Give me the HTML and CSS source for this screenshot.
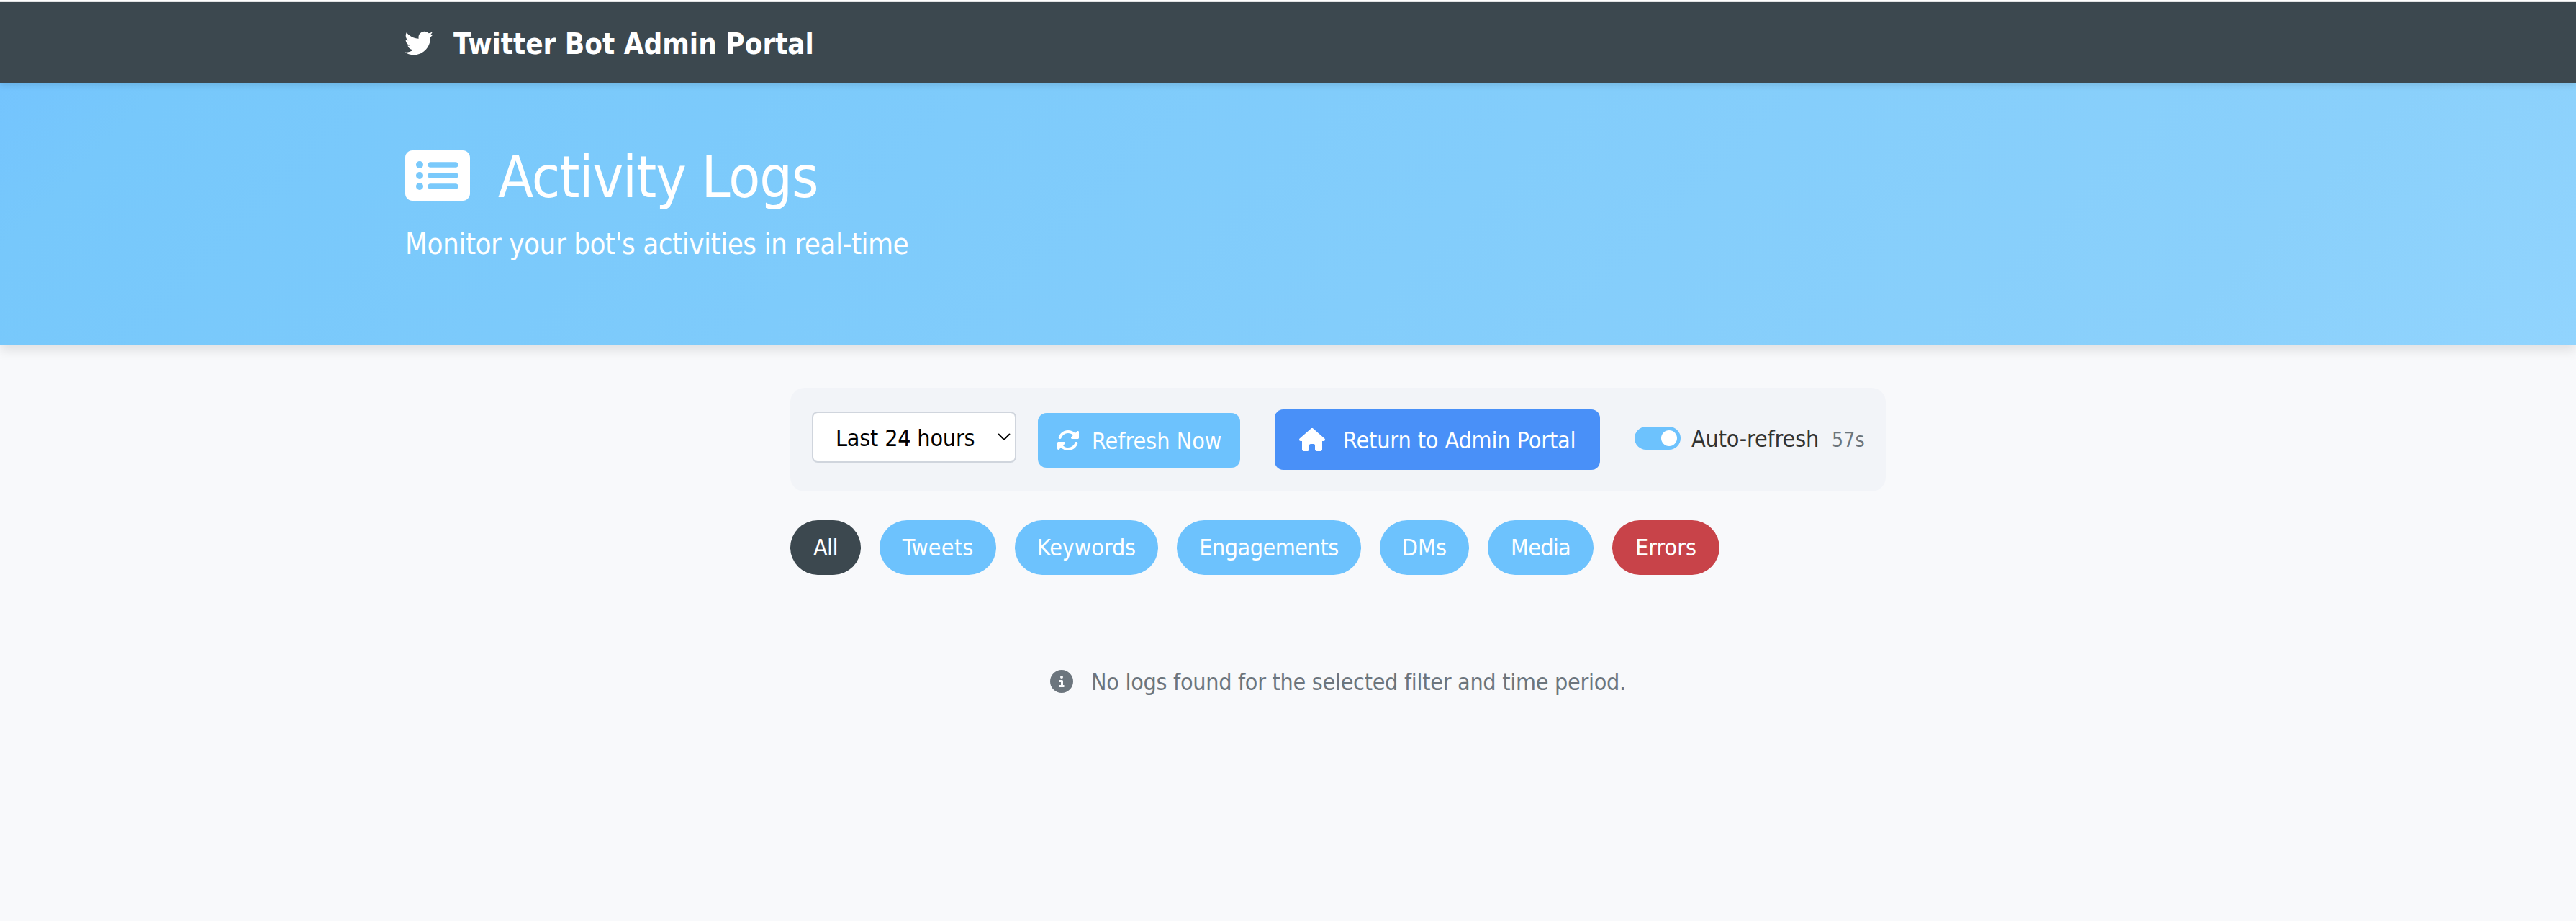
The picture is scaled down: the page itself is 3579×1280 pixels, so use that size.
FILE: index.html
```html
<!DOCTYPE html>
<html lang="en">
<head>
<meta charset="utf-8">
<title>Activity Logs</title>
<link rel="stylesheet" href="styles.css">
</head>
<body>
<nav class="navbar">
  <svg class="icon-brand" viewBox="0 0 512 512"><path d="M459.37 151.716c.325 4.548.325 9.097.325 13.645 0 138.72-105.583 298.558-298.558 298.558-59.452 0-114.68-17.219-161.137-47.106 8.447.974 16.568 1.299 25.34 1.299 49.055 0 94.213-16.568 130.274-44.832-46.132-.975-84.792-31.188-98.112-72.772 6.498.974 12.995 1.624 19.818 1.624 9.421 0 18.843-1.3 27.614-3.573-48.081-9.747-84.143-51.98-84.143-102.985v-1.299c13.969 7.797 30.214 12.67 47.431 13.319-28.264-18.843-46.781-51.005-46.781-87.391 0-19.492 5.197-37.36 14.294-52.954 51.655 63.675 129.3 105.258 216.365 109.807-1.624-7.797-2.599-15.918-2.599-24.04 0-57.828 46.782-104.934 104.934-104.934 30.213 0 57.502 12.67 76.67 33.137 23.715-4.548 46.456-13.32 66.599-25.34-7.798 24.366-24.366 44.833-46.132 57.827 21.117-2.273 41.584-8.122 60.426-16.243-14.292 20.791-32.161 39.308-52.628 54.253z"/></svg>
  <span class="brand">Twitter Bot Admin Portal</span>
</nav>
<header class="hero">
  <div class="hero-title">
    <svg class="icon-list" viewBox="0 0 576 512"><path d="M0 96C0 60.7 28.7 32 64 32H512c35.3 0 64 28.7 64 64V416c0 35.3-28.7 64-64 64H64c-35.3 0-64-28.7-64-64V96zM128 288a32 32 0 1 0 0-64 32 32 0 1 0 0 64zm32-128a32 32 0 1 0 -64 0 32 32 0 1 0 64 0zM128 384a32 32 0 1 0 0-64 32 32 0 1 0 0 64zm96-248c-13.3 0-24 10.7-24 24s10.7 24 24 24H448c13.3 0 24-10.7 24-24s-10.7-24-24-24H224zm0 96c-13.3 0-24 10.7-24 24s10.7 24 24 24H448c13.3 0 24-10.7 24-24s-10.7-24-24-24H224zm0 96c-13.3 0-24 10.7-24 24s10.7 24 24 24H448c13.3 0 24-10.7 24-24s-10.7-24-24-24H224z"/></svg>
    <h1>Activity Logs</h1>
  </div>
  <p class="lead">Monitor your bot's activities in real-time</p>
</header>
<main class="content">
  <section class="controls">
    <div class="select"><span>Last 24 hours</span>
      <svg class="chevron" viewBox="0 0 18 11"><path d="M1.5 1.5 9 9l7.500-7.500"/></svg>
    </div>
    <button class="btn btn-refresh">
      <svg class="icon" viewBox="0 0 512 512"><path d="M142.900 142.900c62.200-62.200 162.700-62.500 225.300-1L327 183c-6.900 6.900-8.900 17.200-5.200 26.200s12.500 14.800 22.200 14.800H472c13.300 0 24-10.700 24-24V72c0-9.700-5.800-18.500-14.800-22.200s-19.300-1.700-26.200 5.200L413.400 96.600c-87.600-86.500-228.700-86.200-315.800 1C73.200 122 55.600 150.700 44.800 181.400c-5.900 16.700 2.900 34.900 19.500 40.800s34.900-2.900 40.800-19.500c7.700-21.800 20.200-42.300 37.800-59.800zM16 312V440c0 9.700 5.800 18.500 14.800 22.200s19.300 1.700 26.200-5.200l41.600-41.600c87.600 86.500 228.700 86.200 315.800-1c24.400-24.400 42.100-53.100 52.900-83.700c5.900-16.700-2.900-34.900-19.500-40.800s-34.900 2.900-40.800 19.500c-7.700 21.800-20.200 42.300-37.800 59.800c-62.200 62.200-162.700 62.500-225.300 1L185 329c6.900-6.900 8.900-17.200 5.200-26.200s-12.500-14.800-22.200-14.800H40c-13.300 0-24 10.700-24 24z"/></svg>
      <span>Refresh Now</span>
    </button>
    <a class="btn btn-return">
      <svg class="icon icon-home" viewBox="0 0 576 512"><path d="M575.8 255.5c0 18-15 32.1-32 32.1h-32l.7 160.2c0 2.7-.2 5.4-.5 8.1V472c0 22.1-17.900 40-40 40H392c-22.100 0-40-17.900-40-40V384c0-17.700-14.300-32-32-32H256c-17.700 0-32 14.300-32 32v88c0 22.100-17.900 40-40 40H104c-22.100 0-40-17.900-40-40V287.600H32c-18 0-32-14-32-32.100c0-9 3-17 10-24L266.400 8c7-7 15-8 22-8s15 2 21 7L564.800 231.500c8 7 12 15 11 24z"/></svg>
      <span>Return to Admin Portal</span>
    </a>
    <div class="switch"><span class="knob"></span></div>
    <span class="switch-label">Auto-refresh</span>
    <span class="countdown">57s</span>
  </section>
  <section class="filters">
    <button class="pill pill-all">All</button>
    <button class="pill pill-tweets">Tweets</button>
    <button class="pill pill-keywords">Keywords</button>
    <button class="pill pill-engagements">Engagements</button>
    <button class="pill pill-dms">DMs</button>
    <button class="pill pill-media">Media</button>
    <button class="pill pill-errors">Errors</button>
  </section>
  <section class="empty">
    <svg class="icon" viewBox="0 0 512 512"><path d="M256 512A256 256 0 1 0 256 0a256 256 0 1 0 0 512zM216 336h24V272H216c-13.300 0-24-10.700-24-24s10.700-24 24-24h48c13.300 0 24 10.700 24 24v88h8c13.300 0 24 10.700 24 24s-10.700 24-24 24H216c-13.300 0-24-10.700-24-24s10.700-24 24-24zm40-208a32 32 0 1 1 0 64 32 32 0 1 1 0-64z"/></svg>
    <span>No logs found for the selected filter and time period.</span>
  </section>
</main>
</body>
</html>
```
FILE: styles.css
```css
* { box-sizing: border-box; }
body {
  margin: 0;
  min-height: 1280px;
  background: #f8f9fb;
  color: #333;
  font-family: "DejaVu Sans Condensed", "DejaVu Sans", sans-serif;
  font-size: 32px;
  line-height: 48px;
  white-space: nowrap;
  border-top: 1px solid #fff;
}
svg { display: block; flex: none; fill: currentColor; }
h1, p { margin: 0; font-weight: 400; }
button { font: inherit; border: 0; margin: 0; color: inherit; }

.navbar {
  position: relative;
  z-index: 1;
  display: flex;
  align-items: flex-start;
  gap: 28px;
  height: 114px;
  padding: 28px 562px 0;
  border-top: 2px solid #e1e2e3;
  background: #3c484f;
  color: #fff;
  box-shadow: 0 4px 8px rgba(0, 0, 0, .1);
}
.icon-brand { width: 40px; height: 40px; margin-top: 9px; }
.brand { font-size: 40px; line-height: 60px; font-weight: 700; }

.hero {
  height: 364px;
  padding: 84px 563px 0;
  background: linear-gradient(135deg, #74c4fe, #77c8fb 6%, #8ad0fb 85%, #91d4fe);
  color: #fff;
  box-shadow: 0 8px 15px rgba(0, 0, 0, .1);
}
.hero-title { display: flex; gap: 39px; margin-bottom: 14px; }
.icon-list { width: 90px; height: 80px; margin-top: 5px; }
h1 { font-size: 80px; line-height: 96px; letter-spacing: -1.02px; }
.lead { font-size: 40px; line-height: 60px; letter-spacing: -.49px; }

.content { width: 1522px; margin: 60px 0 0 1098px; }
.controls {
  display: flex;
  align-items: flex-start;
  height: 144px;
  padding: 0 0 0 30px;
  border-radius: 20px;
  background: #f2f4f8;
}
.controls > * { flex: none; }
.select {
  display: flex;
  justify-content: space-between;
  width: 284px;
  height: 71px;
  margin-top: 33px;
  padding: 11px 6px 0 31px;
  border: 2px solid #d0d5dd;
  border-radius: 8px;
  background: #fff;
  color: #000;
  letter-spacing: -.19px;
}
.chevron {
  width: 18px;
  height: 11px;
  margin-top: 17px;
  fill: none;
  stroke: #000;
  stroke-width: 1.8;
  stroke-linecap: round;
  stroke-linejoin: round;
}
.btn { display: flex; align-items: flex-start; color: #fff; border-radius: 12px; }
.icon { width: 32px; height: 32px; }
.btn-refresh {
  gap: 17px;
  width: 281px;
  height: 76px;
  margin: 35px 0 0 30px;
  padding: 15px 0 0 26px;
  background: #6dc2fd;
}
.btn-refresh .icon { margin-top: 7px; }
.btn-return {
  gap: 25px;
  width: 452px;
  height: 84px;
  margin: 30px 0 0 48px;
  padding: 19px 0 0 34px;
  background: #4990f8;
  letter-spacing: -.11px;
}
.icon-home { width: 36px; margin-top: 7px; }
.switch {
  display: flex;
  justify-content: flex-end;
  width: 64px;
  height: 32px;
  margin: 54px 0 0 48px;
  padding: 5px;
  border-radius: 16px;
  background: #6dc2fd;
}
.knob { width: 22px; height: 22px; border-radius: 50%; background: #fff; }
.switch-label { margin: 47px 0 0 15px; width: 195px; letter-spacing: -.15px; }
.countdown {
  margin-top: 52px;
  font-size: 28px;
  line-height: 42px;
  letter-spacing: .2px;
  color: #6c757d;
}

.filters { display: flex; gap: 26px; margin-top: 40px; }
.pill {
  height: 76px;
  padding: 0 0 1px;
  border-radius: 40px;
  background: #6dc2fd;
  color: #fff;
  text-align: center;
}
.pill-all { width: 98px; background: #3c484f; letter-spacing: -.5px; }
.pill-tweets { width: 162px; letter-spacing: .19px; }
.pill-keywords { width: 199px; letter-spacing: -.1px; }
.pill-engagements { width: 256px; letter-spacing: -.47px; }
.pill-dms { width: 124px; letter-spacing: .2px; }
.pill-media { width: 147px; letter-spacing: -.7px; }
.pill-errors { width: 149px; background: #c84349; }

.empty {
  display: flex;
  gap: 25px;
  margin: 125px 0 0 361px;
  color: #6c757d;
  letter-spacing: -.284px;
}
.empty .icon { margin-top: 7px; }
```
